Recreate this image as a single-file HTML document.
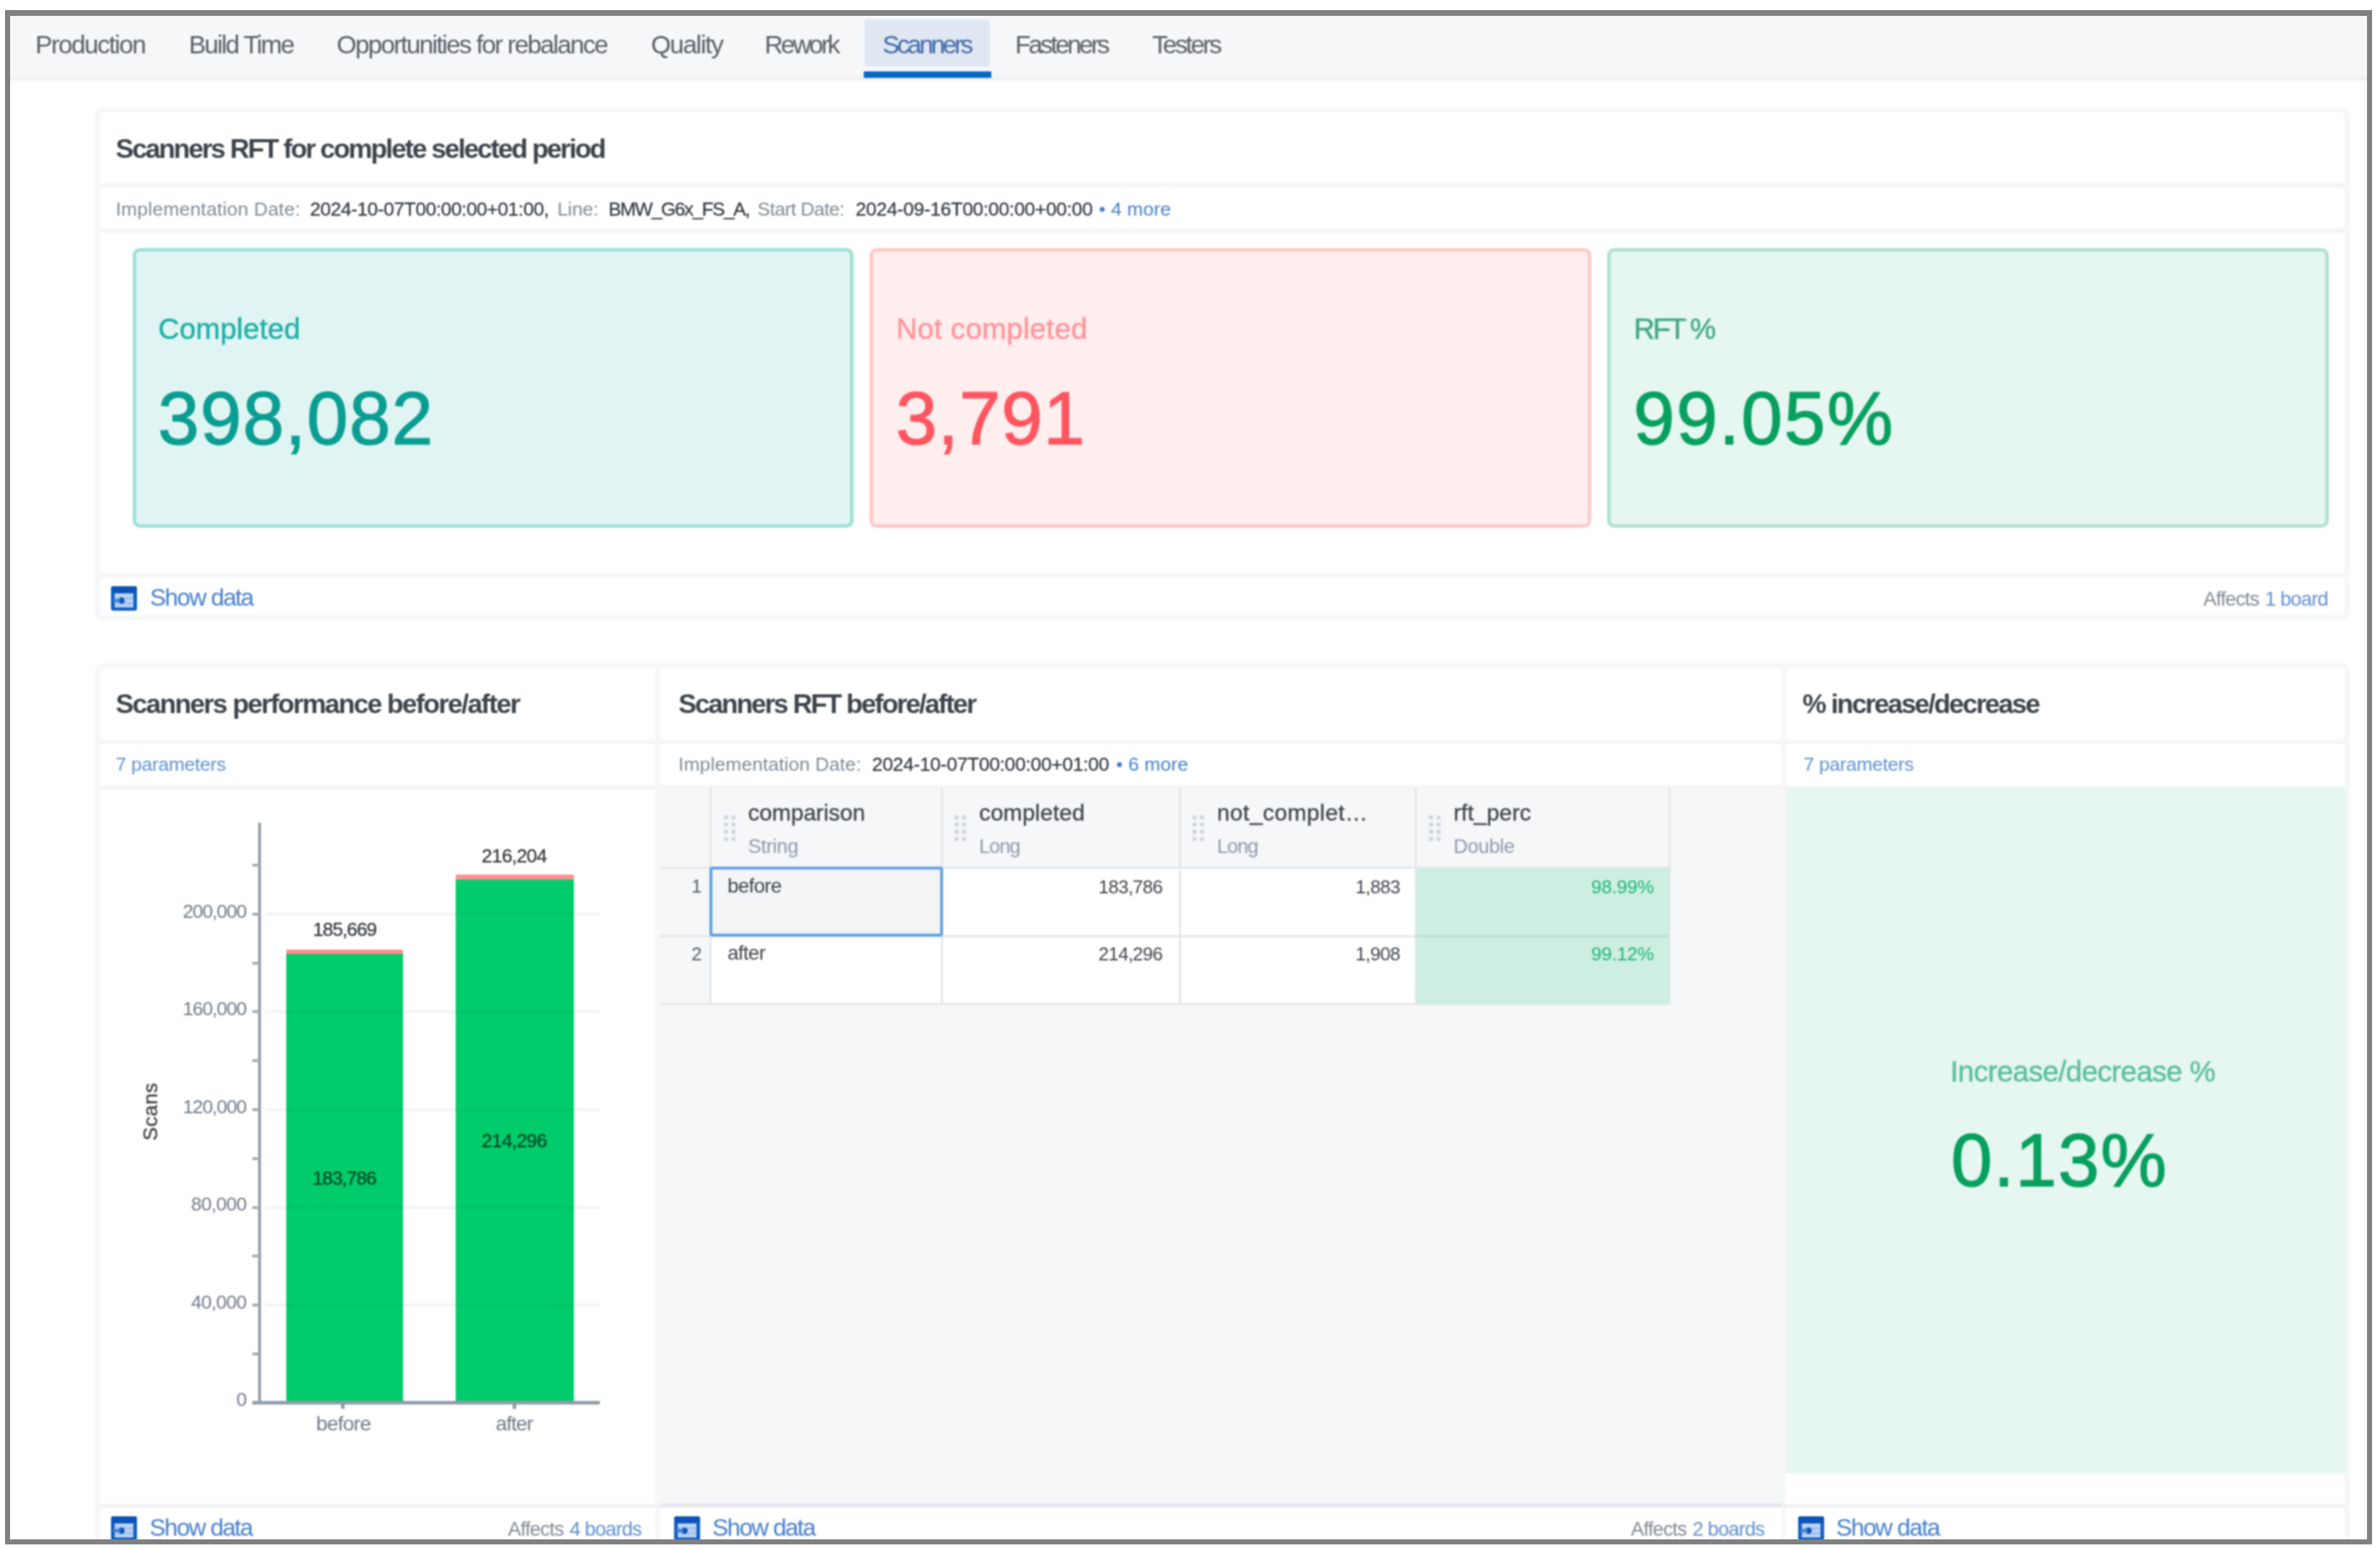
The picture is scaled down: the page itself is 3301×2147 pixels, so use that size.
<!DOCTYPE html>
<html><head><meta charset="utf-8"><title>Scanners</title>
<style>
html,body{margin:0;padding:0;background:#fff;}
body{width:3301px;height:2147px;position:relative;overflow:hidden;font-family:"Liberation Sans", sans-serif;}
#c{position:absolute;left:0;top:0;width:3301px;height:2147px;clip-path:inset(21px 18px 12px 14px);filter:blur(1.1px);}
#c>div,#c>svg,#c>span{position:absolute;box-sizing:content-box;}
#c>span{white-space:pre;line-height:1;}
#f{position:absolute;left:7px;top:14px;width:3269px;height:2113px;border:7px solid #808080;border-top-width:8px;}
</style></head>
<body>
<div id="c">
<div style="left:0px;top:8px;width:3301px;height:100px;background:#f5f7f9;"></div>
<div style="left:0px;top:106px;width:3301px;height:7px;background:linear-gradient(#f1f3f5,#eceef1 45%,#fbfcfc);"></div>
<div style="left:1199px;top:27px;width:174px;height:65px;background:#dfe7f3;border-radius:4px;"></div>
<div style="left:1198px;top:99px;width:177px;height:9px;background:#0868c0;border-radius:1px;"></div>
<div style="left:131.5px;top:149px;width:3113.0px;height:696.5px;border:7px solid #f5f7f9;border-radius:10px;background:#fff;"></div>
<div style="left:138px;top:254px;width:3114px;height:6px;background:#f4f5f7;"></div>
<div style="left:138px;top:317px;width:3114px;height:6px;background:#f4f5f7;"></div>
<div style="left:138px;top:795px;width:3114px;height:6px;background:#f4f5f7;"></div>
<div style="left:183.75px;top:343.75px;width:990.0px;height:378.5px;border:5.5px solid #a0e0d9;border-radius:10px;background:#e0f5f3;"></div>
<div style="left:1205.75px;top:343.75px;width:991.5px;height:378.5px;border:5.5px solid #ffc9c9;border-radius:10px;background:#ffeeee;"></div>
<div style="left:2228.75px;top:343.75px;width:991.0px;height:378.5px;border:5.5px solid #b2e2d1;border-radius:10px;background:#e6f6f0;"></div>
<svg style="left:153.5px;top:812.5px" width="36" height="34" viewBox="0 0 36 34"><rect x="0" y="0" width="36" height="34" rx="3.5" fill="#0f5ec2"/><rect x="0" y="0" width="36" height="9" rx="3" fill="#0a54b8"/><rect x="5" y="10" width="26" height="19.5" fill="#bdd3f2"/><rect x="5" y="15.5" width="26" height="3" fill="#9dbfea"/><rect x="5" y="22.5" width="26" height="3" fill="#9dbfea"/><circle cx="14.5" cy="20" r="4.4" fill="#0b52b4"/><rect x="3" y="18" width="10" height="4" fill="#3f7fd2"/></svg>
<div style="left:131.5px;top:919.5px;width:3113.0px;height:1400px;border:7px solid #f5f7f9;border-radius:10px;background:#fff;"></div>
<div style="left:915px;top:1093px;width:1557px;height:993px;background:#f5f7f9;"></div>
<div style="left:2476px;top:1091px;width:777px;height:953px;background:#e6f6f0;"></div>
<div style="left:909px;top:926px;width:6.5px;height:1221px;background:#f5f7f9;"></div>
<div style="left:2470.5px;top:926px;width:6.5px;height:1221px;background:#f5f7f9;"></div>
<div style="left:138px;top:1026px;width:3114px;height:6px;background:#f4f5f7;"></div>
<div style="left:138px;top:1088.5px;width:2334px;height:6.0px;background:#f4f5f7;"></div>
<div style="left:138px;top:2085.5px;width:3114px;height:5.0px;background:#eff1f3;"></div>
<div style="left:915.5px;top:2084.5px;width:1555.0px;height:5.0px;background:#e4e7eb;"></div>
<div style="left:368px;top:1808.0px;width:464px;height:4.0px;background:#f1f3f6;"></div>
<div style="left:368px;top:1672.5px;width:464px;height:4.0px;background:#f1f3f6;"></div>
<div style="left:368px;top:1536.9px;width:464px;height:4.0px;background:#f1f3f6;"></div>
<div style="left:368px;top:1401.4px;width:464px;height:4.0px;background:#f1f3f6;"></div>
<div style="left:368px;top:1265.9px;width:464px;height:4.0px;background:#f1f3f6;"></div>
<div style="left:396.5px;top:1316.5px;width:162.5px;height:6.2999999999999545px;background:#ff8f8f;"></div>
<div style="left:396.5px;top:1322.8px;width:162.5px;height:621.7px;background:#00cc6b;"></div>
<div style="left:632px;top:1213.0px;width:163.5px;height:6.5px;background:#ff8f8f;"></div>
<div style="left:632px;top:1219.5px;width:163.5px;height:725.0px;background:#00cc6b;"></div>
<div style="left:396.5px;top:1808.5px;width:162.5px;height:3.0px;background:rgba(0,60,30,0.05);"></div>
<div style="left:632px;top:1808.5px;width:163.5px;height:3.0px;background:rgba(0,60,30,0.05);"></div>
<div style="left:396.5px;top:1673.0px;width:162.5px;height:3.0px;background:rgba(0,60,30,0.05);"></div>
<div style="left:632px;top:1673.0px;width:163.5px;height:3.0px;background:rgba(0,60,30,0.05);"></div>
<div style="left:396.5px;top:1537.4px;width:162.5px;height:3.0px;background:rgba(0,60,30,0.05);"></div>
<div style="left:632px;top:1537.4px;width:163.5px;height:3.0px;background:rgba(0,60,30,0.05);"></div>
<div style="left:396.5px;top:1401.9px;width:162.5px;height:3.0px;background:rgba(0,60,30,0.05);"></div>
<div style="left:632px;top:1401.9px;width:163.5px;height:3.0px;background:rgba(0,60,30,0.05);"></div>
<div style="left:632px;top:1266.4px;width:163.5px;height:3.0px;background:rgba(0,60,30,0.05);"></div>
<div style="left:357.5px;top:1140.5px;width:4.5px;height:807.5px;background:#929cab;"></div>
<div style="left:349.5px;top:1943.2px;width:482.5px;height:4.599999999999909px;background:#929cab;"></div>
<div style="left:349.5px;top:1875.7px;width:10.5px;height:4.0px;background:#a3acb9;"></div>
<div style="left:349.5px;top:1808.0px;width:10.5px;height:4.0px;background:#a3acb9;"></div>
<div style="left:349.5px;top:1740.2px;width:10.5px;height:4.0px;background:#a3acb9;"></div>
<div style="left:349.5px;top:1672.5px;width:10.5px;height:4.0px;background:#a3acb9;"></div>
<div style="left:349.5px;top:1604.7px;width:10.5px;height:4.0px;background:#a3acb9;"></div>
<div style="left:349.5px;top:1536.9px;width:10.5px;height:4.0px;background:#a3acb9;"></div>
<div style="left:349.5px;top:1469.2px;width:10.5px;height:4.0px;background:#a3acb9;"></div>
<div style="left:349.5px;top:1401.4px;width:10.5px;height:4.0px;background:#a3acb9;"></div>
<div style="left:349.5px;top:1333.7px;width:10.5px;height:4.0px;background:#a3acb9;"></div>
<div style="left:349.5px;top:1265.9px;width:10.5px;height:4.0px;background:#a3acb9;"></div>
<div style="left:349.5px;top:1198.1px;width:10.5px;height:4.0px;background:#a3acb9;"></div>
<div style="left:473px;top:1945.5px;width:5px;height:8.5px;background:#929cab;"></div>
<div style="left:710.5px;top:1945.5px;width:5.0px;height:8.5px;background:#929cab;"></div>
<svg style="left:153.5px;top:2102.7px" width="36" height="34" viewBox="0 0 36 34"><rect x="0" y="0" width="36" height="34" rx="3.5" fill="#0f5ec2"/><rect x="0" y="0" width="36" height="9" rx="3" fill="#0a54b8"/><rect x="5" y="10" width="26" height="19.5" fill="#bdd3f2"/><rect x="5" y="15.5" width="26" height="3" fill="#9dbfea"/><rect x="5" y="22.5" width="26" height="3" fill="#9dbfea"/><circle cx="14.5" cy="20" r="4.4" fill="#0b52b4"/><rect x="3" y="18" width="10" height="4" fill="#3f7fd2"/></svg>
<div style="left:915px;top:1093px;width:1400px;height:110px;background:#f5f7f9;"></div>
<div style="left:985px;top:1203px;width:1330px;height:189px;background:#fff;"></div>
<div style="left:915px;top:1203px;width:70px;height:189px;background:#f5f7f9;"></div>
<div style="left:984px;top:1093px;width:3px;height:299px;background:#e4e7eb;"></div>
<div style="left:1305px;top:1093px;width:3px;height:299px;background:#e4e7eb;"></div>
<div style="left:1634.5px;top:1093px;width:3.0px;height:299px;background:#e4e7eb;"></div>
<div style="left:1961.5px;top:1093px;width:3.0px;height:299px;background:#e4e7eb;"></div>
<div style="left:2313.5px;top:1093px;width:3.0px;height:299px;background:#e4e7eb;"></div>
<div style="left:915px;top:1201.5px;width:1401.5px;height:3.0px;background:#e4e7eb;"></div>
<div style="left:915px;top:1296.5px;width:1401.5px;height:3.0px;background:#e4e7eb;"></div>
<div style="left:915px;top:1390.5px;width:1401.5px;height:3.0px;background:#e4e7eb;"></div>
<div style="left:1964.5px;top:1204.5px;width:350.5px;height:187.5px;background:#cdeee0;"></div>
<div style="left:1963px;top:1296.5px;width:352px;height:3.0px;background:#bbdfd0;"></div>
<div style="left:984px;top:1202px;width:315.5px;height:89px;border:4px solid #62a0e6;border-radius:4px;background:#f3f5f7;"></div>
<svg style="left:1003.5px;top:1130.5px" width="16" height="36" viewBox="0 0 16 36"><rect x="0" y="0" width="5.5" height="5.5" fill="#d0d5dc"/><rect x="0" y="10" width="5.5" height="5.5" fill="#d0d5dc"/><rect x="0" y="20" width="5.5" height="5.5" fill="#d0d5dc"/><rect x="0" y="30" width="5.5" height="5.5" fill="#d0d5dc"/><rect x="10.5" y="0" width="5.5" height="5.5" fill="#d0d5dc"/><rect x="10.5" y="10" width="5.5" height="5.5" fill="#d0d5dc"/><rect x="10.5" y="20" width="5.5" height="5.5" fill="#d0d5dc"/><rect x="10.5" y="30" width="5.5" height="5.5" fill="#d0d5dc"/></svg>
<svg style="left:1324px;top:1130.5px" width="16" height="36" viewBox="0 0 16 36"><rect x="0" y="0" width="5.5" height="5.5" fill="#d0d5dc"/><rect x="0" y="10" width="5.5" height="5.5" fill="#d0d5dc"/><rect x="0" y="20" width="5.5" height="5.5" fill="#d0d5dc"/><rect x="0" y="30" width="5.5" height="5.5" fill="#d0d5dc"/><rect x="10.5" y="0" width="5.5" height="5.5" fill="#d0d5dc"/><rect x="10.5" y="10" width="5.5" height="5.5" fill="#d0d5dc"/><rect x="10.5" y="20" width="5.5" height="5.5" fill="#d0d5dc"/><rect x="10.5" y="30" width="5.5" height="5.5" fill="#d0d5dc"/></svg>
<svg style="left:1654px;top:1130.5px" width="16" height="36" viewBox="0 0 16 36"><rect x="0" y="0" width="5.5" height="5.5" fill="#d0d5dc"/><rect x="0" y="10" width="5.5" height="5.5" fill="#d0d5dc"/><rect x="0" y="20" width="5.5" height="5.5" fill="#d0d5dc"/><rect x="0" y="30" width="5.5" height="5.5" fill="#d0d5dc"/><rect x="10.5" y="0" width="5.5" height="5.5" fill="#d0d5dc"/><rect x="10.5" y="10" width="5.5" height="5.5" fill="#d0d5dc"/><rect x="10.5" y="20" width="5.5" height="5.5" fill="#d0d5dc"/><rect x="10.5" y="30" width="5.5" height="5.5" fill="#d0d5dc"/></svg>
<svg style="left:1982px;top:1130.5px" width="16" height="36" viewBox="0 0 16 36"><rect x="0" y="0" width="5.5" height="5.5" fill="#d0d5dc"/><rect x="0" y="10" width="5.5" height="5.5" fill="#d0d5dc"/><rect x="0" y="20" width="5.5" height="5.5" fill="#d0d5dc"/><rect x="0" y="30" width="5.5" height="5.5" fill="#d0d5dc"/><rect x="10.5" y="0" width="5.5" height="5.5" fill="#d0d5dc"/><rect x="10.5" y="10" width="5.5" height="5.5" fill="#d0d5dc"/><rect x="10.5" y="20" width="5.5" height="5.5" fill="#d0d5dc"/><rect x="10.5" y="30" width="5.5" height="5.5" fill="#d0d5dc"/></svg>
<svg style="left:934.5px;top:2102.7px" width="36" height="34" viewBox="0 0 36 34"><rect x="0" y="0" width="36" height="34" rx="3.5" fill="#0f5ec2"/><rect x="0" y="0" width="36" height="9" rx="3" fill="#0a54b8"/><rect x="5" y="10" width="26" height="19.5" fill="#bdd3f2"/><rect x="5" y="15.5" width="26" height="3" fill="#9dbfea"/><rect x="5" y="22.5" width="26" height="3" fill="#9dbfea"/><circle cx="14.5" cy="20" r="4.4" fill="#0b52b4"/><rect x="3" y="18" width="10" height="4" fill="#3f7fd2"/></svg>
<svg style="left:2494px;top:2102.7px" width="36" height="34" viewBox="0 0 36 34"><rect x="0" y="0" width="36" height="34" rx="3.5" fill="#0f5ec2"/><rect x="0" y="0" width="36" height="9" rx="3" fill="#0a54b8"/><rect x="5" y="10" width="26" height="19.5" fill="#bdd3f2"/><rect x="5" y="15.5" width="26" height="3" fill="#9dbfea"/><rect x="5" y="22.5" width="26" height="3" fill="#9dbfea"/><circle cx="14.5" cy="20" r="4.4" fill="#0b52b4"/><rect x="3" y="18" width="10" height="4" fill="#3f7fd2"/></svg>
<span style="font-size:35.5px;color:#5a5f66;letter-spacing:-1.747px;left:49px;top:44.75px;">Production</span>
<span style="font-size:35.5px;color:#5a5f66;letter-spacing:-2.082px;left:262px;top:44.75px;">Build Time</span>
<span style="font-size:35.5px;color:#5a5f66;letter-spacing:-1.970px;left:467px;top:44.75px;">Opportunities for rebalance</span>
<span style="font-size:35.5px;color:#5a5f66;letter-spacing:-1.583px;left:903px;top:44.75px;">Quality</span>
<span style="font-size:35.5px;color:#5a5f66;letter-spacing:-3.069px;left:1060.5px;top:44.75px;">Rework</span>
<span style="font-size:35.5px;color:#3f68a8;letter-spacing:-3.426px;left:1224px;top:44.75px;">Scanners</span>
<span style="font-size:35.5px;color:#5a5f66;letter-spacing:-3.293px;left:1408px;top:44.75px;">Fasteners</span>
<span style="font-size:35.5px;color:#5a5f66;letter-spacing:-2.904px;left:1598px;top:44.75px;">Testers</span>
<span style="font-size:37.5px;color:#3e434b;font-weight:700;letter-spacing:-2.316px;left:160.5px;top:187.86px;">Scanners RFT for complete selected period</span>
<span style="font-size:26.5px;color:#818a95;letter-spacing:0.216px;left:160.5px;top:276.57px;">Implementation Date:</span>
<span style="font-size:26.5px;color:#353a41;-webkit-text-stroke:0.3px #353a41;letter-spacing:-0.502px;left:430px;top:276.57px;">2024-10-07T00:00:00+01:00,</span>
<span style="font-size:26.5px;color:#818a95;letter-spacing:-0.117px;left:773px;top:276.57px;">Line:</span>
<span style="font-size:26.5px;color:#353a41;-webkit-text-stroke:0.3px #353a41;letter-spacing:-1.665px;left:844px;top:276.57px;">BMW_G6x_FS_A,</span>
<span style="font-size:26.5px;color:#818a95;letter-spacing:-0.567px;left:1050.6px;top:276.57px;">Start Date:</span>
<span style="font-size:26.5px;color:#353a41;-webkit-text-stroke:0.3px #353a41;letter-spacing:-0.320px;left:1186.7px;top:276.57px;">2024-09-16T00:00:00+00:00</span>
<span style="font-size:26.5px;color:#4580cc;letter-spacing:0.125px;left:1524px;top:276.57px;">• 4 more</span>
<span style="font-size:40.5px;color:#1eada4;-webkit-text-stroke:0.5px #1eada4;letter-spacing:0.143px;left:219.5px;top:435.72px;">Completed</span>
<span style="font-size:103px;color:#0b9d92;-webkit-text-stroke:1.5px #0b9d92;letter-spacing:1.529px;left:219px;top:528.61px;">398,082</span>
<span style="font-size:40.5px;color:#ff949c;-webkit-text-stroke:0.5px #ff949c;letter-spacing:0.322px;left:1243.0px;top:435.72px;">Not completed</span>
<span style="font-size:103px;color:#ff5560;-webkit-text-stroke:1.5px #ff5560;letter-spacing:1.059px;left:1242.5px;top:528.61px;">3,791</span>
<span style="font-size:40.5px;color:#43a787;-webkit-text-stroke:0.5px #43a787;letter-spacing:-2.816px;left:2266.0px;top:435.72px;">RFT %</span>
<span style="font-size:103px;color:#07a05f;-webkit-text-stroke:1.5px #07a05f;letter-spacing:2.131px;left:2265.5px;top:528.61px;">99.05%</span>
<span style="font-size:33.5px;color:#4580cc;letter-spacing:-1.727px;left:208px;top:812.04px;">Show data</span>
<span style="font-size:27.5px;color:#818a95;letter-spacing:-0.927px;left:3056px;top:817.22px;">Affects</span>
<span style="font-size:27.5px;color:#5f90d0;letter-spacing:-0.880px;left:3141.5px;top:817.22px;">1 board</span>
<span style="font-size:37.5px;color:#3e434b;font-weight:700;letter-spacing:-1.927px;left:160.5px;top:958.06px;">Scanners performance before/after</span>
<span style="font-size:37.5px;color:#3e434b;font-weight:700;letter-spacing:-2.287px;left:941px;top:958.06px;">Scanners RFT before/after</span>
<span style="font-size:37.5px;color:#3e434b;font-weight:700;letter-spacing:-2.168px;left:2500px;top:958.06px;">% increase/decrease</span>
<span style="font-size:26.5px;color:#5f90d0;letter-spacing:-0.286px;left:160.5px;top:1047.07px;">7 parameters</span>
<span style="font-size:26.5px;color:#818a95;letter-spacing:0.085px;left:941px;top:1047.07px;">Implementation Date:</span>
<span style="font-size:26.5px;color:#353a41;-webkit-text-stroke:0.3px #353a41;letter-spacing:-0.320px;left:1209.5px;top:1047.07px;">2024-10-07T00:00:00+01:00</span>
<span style="font-size:26.5px;color:#4580cc;letter-spacing:0.125px;left:1548px;top:1047.07px;">• 6 more</span>
<span style="font-size:26.5px;color:#5f90d0;letter-spacing:-0.286px;left:2501.5px;top:1047.07px;">7 parameters</span>
<span style="font-size:26.5px;color:#717a87;left:327.75px;top:1928.27px;">0</span>
<span style="font-size:26.5px;color:#717a87;letter-spacing:-0.713px;left:265.00px;top:1792.75px;">40,000</span>
<span style="font-size:26.5px;color:#717a87;letter-spacing:-0.713px;left:265.00px;top:1657.23px;">80,000</span>
<span style="font-size:26.5px;color:#717a87;letter-spacing:-1.133px;left:253.50px;top:1521.71px;">120,000</span>
<span style="font-size:26.5px;color:#717a87;letter-spacing:-1.133px;left:253.50px;top:1386.19px;">160,000</span>
<span style="font-size:26.5px;color:#717a87;letter-spacing:-1.133px;left:253.50px;top:1250.67px;">200,000</span>
<span style="font-size:26.5px;color:#33373c;-webkit-text-stroke:0.3px #33373c;letter-spacing:-1.133px;left:434px;top:1275.77px;">185,669</span>
<span style="font-size:26.5px;color:#33373c;-webkit-text-stroke:0.3px #33373c;letter-spacing:-0.799px;left:668px;top:1174.07px;">216,204</span>
<span style="font-size:26.5px;color:#054526;-webkit-text-stroke:0.3px #054526;letter-spacing:-1.133px;left:433.5px;top:1620.57px;">183,786</span>
<span style="font-size:26.5px;color:#054526;-webkit-text-stroke:0.3px #054526;letter-spacing:-0.799px;left:668px;top:1569.07px;">214,296</span>
<span style="font-size:28.5px;color:#717a87;letter-spacing:-0.863px;left:438.5px;top:1959.87px;">before</span>
<span style="font-size:28.5px;color:#717a87;letter-spacing:-1.133px;left:687.5px;top:1959.87px;">after</span>
<span style="font-size:28px;color:#3d4248;-webkit-text-stroke:0.4px #3d4248;letter-spacing:0.543px;transform-origin:0 0;transform:rotate(-90deg);left:195px;top:1582px;">Scans</span>
<span style="font-size:33.5px;color:#4580cc;letter-spacing:-1.789px;left:207.5px;top:2101.54px;">Show data</span>
<span style="font-size:27.5px;color:#818a95;letter-spacing:-0.927px;left:704.5px;top:2106.92px;">Affects</span>
<span style="font-size:27.5px;color:#5f90d0;letter-spacing:-0.933px;left:790px;top:2106.92px;">4 boards</span>
<span style="font-size:31.5px;color:#41464d;-webkit-text-stroke:0.35px #41464d;letter-spacing:-0.036px;left:1037.5px;top:1112.34px;">comparison</span>
<span style="font-size:27.5px;color:#8f9aab;letter-spacing:-0.369px;left:1037.5px;top:1160.22px;">String</span>
<span style="font-size:31.5px;color:#41464d;-webkit-text-stroke:0.35px #41464d;letter-spacing:0.145px;left:1358px;top:1112.34px;">completed</span>
<span style="font-size:27.5px;color:#8f9aab;letter-spacing:-1.229px;left:1358px;top:1160.22px;">Long</span>
<span style="font-size:31.5px;color:#41464d;-webkit-text-stroke:0.35px #41464d;letter-spacing:0.536px;left:1688px;top:1112.34px;">not_complet…</span>
<span style="font-size:27.5px;color:#8f9aab;letter-spacing:-1.229px;left:1688px;top:1160.22px;">Long</span>
<span style="font-size:31.5px;color:#41464d;-webkit-text-stroke:0.35px #41464d;letter-spacing:0.100px;left:2016px;top:1112.34px;">rft_perc</span>
<span style="font-size:27.5px;color:#8f9aab;letter-spacing:-0.431px;left:2016px;top:1160.22px;">Double</span>
<span style="font-size:26px;color:#59606b;left:959.03px;top:1216.49px;">1</span>
<span style="font-size:26px;color:#59606b;left:959.03px;top:1309.99px;">2</span>
<span style="font-size:28px;color:#41464d;letter-spacing:-0.781px;left:1009px;top:1214.80px;">before</span>
<span style="font-size:28px;color:#41464d;letter-spacing:-0.758px;left:1009px;top:1308.30px;">after</span>
<span style="font-size:26px;color:#41464d;letter-spacing:-0.747px;left:1523.50px;top:1216.99px;">183,786</span>
<span style="font-size:26px;color:#41464d;letter-spacing:-0.747px;left:1523.50px;top:1310.49px;">214,296</span>
<span style="font-size:26px;color:#41464d;letter-spacing:-0.645px;left:1880.00px;top:1216.99px;">1,883</span>
<span style="font-size:26px;color:#41464d;letter-spacing:-0.645px;left:1880.00px;top:1310.49px;">1,908</span>
<span style="font-size:26px;color:#1cb77b;letter-spacing:-0.237px;left:2207.00px;top:1216.99px;">98.99%</span>
<span style="font-size:26px;color:#1cb77b;letter-spacing:-0.237px;left:2207.00px;top:1310.49px;">99.12%</span>
<span style="font-size:33.5px;color:#4580cc;letter-spacing:-1.789px;left:988px;top:2101.54px;">Show data</span>
<span style="font-size:27.5px;color:#818a95;letter-spacing:-0.927px;left:2262px;top:2106.92px;">Affects</span>
<span style="font-size:27.5px;color:#5f90d0;letter-spacing:-0.933px;left:2347.5px;top:2106.92px;">2 boards</span>
<span style="font-size:40.5px;color:#5cbf9b;-webkit-text-stroke:0.5px #5cbf9b;letter-spacing:-0.693px;left:2705px;top:1466.22px;">Increase/decrease %</span>
<span style="font-size:103px;color:#07a05f;-webkit-text-stroke:1.5px #07a05f;letter-spacing:1.734px;left:2706px;top:1558.31px;">0.13%</span>
<span style="font-size:33.5px;color:#4580cc;letter-spacing:-1.664px;left:2546.5px;top:2101.54px;">Show data</span>
</div>
<div id="f"></div>
</body></html>
